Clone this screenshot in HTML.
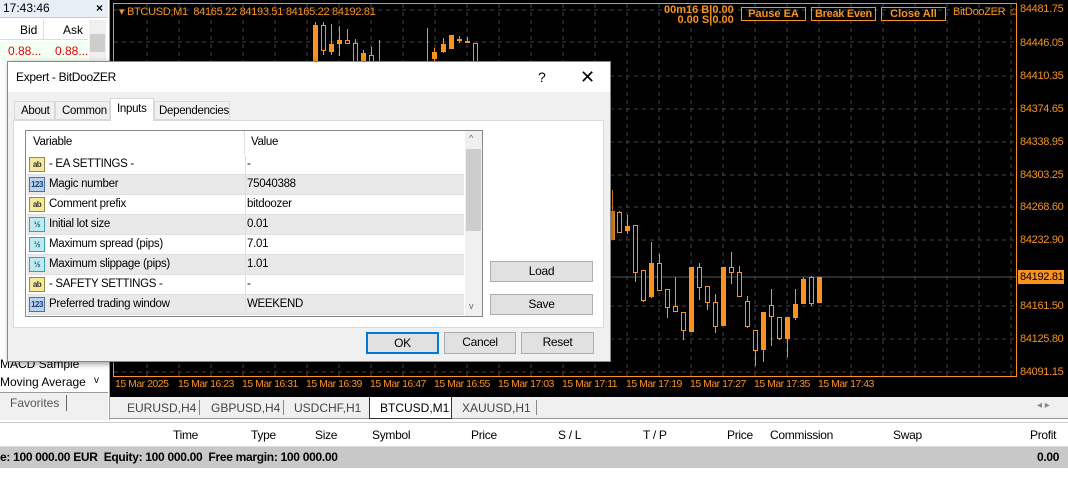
<!DOCTYPE html><html><head><meta charset="utf-8"><style>
*{box-sizing:border-box;margin:0;padding:0}
body{width:1068px;height:499px;overflow:hidden;background:#fff;font-family:"Liberation Sans",sans-serif;font-size:12px;color:#000;position:relative}
.a{position:absolute}
.dlg,.dlg .a{font-size:11.5px;letter-spacing:-0.3px}
.btn{position:absolute;background:#e1e1e1;border:1px solid #adadad;text-align:center;line-height:18px;font-size:12px}
.row{position:absolute;left:1px;width:437px;height:20px;border-bottom:1px solid #e0e0e0;line-height:19px}
.row.g{background:#e9e9e9}
.row .ic{position:absolute;left:2px;top:2px;width:16px;height:15px;border:1px solid #9a8a40;font-size:8px;line-height:13px;text-align:center;font-weight:bold;letter-spacing:-0.5px}
.ab{background:#f5e9a0;color:#333}
.n123{background:#b9d2ee;border-color:#4a70a0!important;color:#1b3d77}
.half{background:#bfeaf0;border-color:#3aa0b0!important;color:#1b6077}
.row .v{position:absolute;left:22px}
.row .w{position:absolute;left:220px}
.row .d{position:absolute;left:218px;top:0;width:1px;height:20px;background:#e0e0e0}
.pl{position:absolute;left:1020px;color:#f7931e;font-size:11px;letter-spacing:-0.3px}
.tl{position:absolute;top:378px;color:#f7931e;font-size:10.5px;letter-spacing:-0.5px}
.hd{position:absolute;top:428px;font-size:12px;letter-spacing:-0.3px}
.ob{position:absolute;top:7px;height:14px;border:1px solid #f7931e;color:#f7931e;font-weight:bold;font-size:11px;line-height:12px;text-align:center}
</style></head><body>
<div class="a" style="left:110px;top:0;width:958px;height:397px;background:#000"></div>
<svg class="a" style="left:0;top:0" width="1068" height="397">
<rect x="113.5" y="3.5" width="903" height="373" fill="none" stroke="#f7931e" stroke-width="1"/>
<g stroke="#444" stroke-dasharray="4,4">
<line x1="114" y1="10" x2="1016" y2="10"/><line x1="114" y1="42" x2="1016" y2="42"/><line x1="114" y1="76" x2="1016" y2="76"/><line x1="114" y1="109" x2="1016" y2="109"/><line x1="114" y1="142" x2="1016" y2="142"/><line x1="114" y1="175" x2="1016" y2="175"/><line x1="114" y1="207" x2="1016" y2="207"/><line x1="114" y1="240" x2="1016" y2="240"/><line x1="114" y1="306" x2="1016" y2="306"/><line x1="114" y1="339" x2="1016" y2="339"/><line x1="114" y1="372" x2="1016" y2="372"/>
</g>
<g stroke="#444" stroke-dasharray="4,4" id="vg"></g>
<line x1="114" y1="277" x2="1016" y2="277" stroke="#555"/>
<g id="cd"></g>
</svg>
<script>
var vg=document.getElementById('vg'),s='';
for(var x=147;x<1016;x+=32)s+='<line x1="'+x+'" y1="4" x2="'+x+'" y2="376"/>';
vg.innerHTML=s;
var c=[[315,1,25,62,22,62],[323,0,25,50,22,55],[331,1,44,52,24,55],[339,1,40,44,26,56],[347,0,40,43,29,44],[355,0,43,62,39,62],[363,1,53,62,50,62],[371,0,55,62,47,62],[379,0,62,62,40,62],[427,0,61,62,28,62],[434,1,52,59,48,62],[443,1,44,52,38,53],[451,1,35,49,35,49],[459,0,39,40,36,43],[467,0,41,42,37,42],[475,0,43,62,43,62],
[612,1,211,240,190,240],[619,0,212,232,211,233],[627,1,226,231,215,234],[635,0,225,272,225,282],[643,0,270,300,270,302],[651,1,263,297,242,298],[659,0,263,290,254,291],[667,0,289,307,289,318],[675,0,306,311,277,311],[683,0,312,330,312,340],[691,1,267,332,267,332],[699,0,267,287,263,300],[707,0,286,302,286,310],[715,0,302,326,294,333],[723,1,267,326,267,326],[731,0,267,272,252,284],[739,0,272,296,266,297],[747,0,301,326,296,328],[755,0,330,350,330,366],[763,1,312,350,312,362],[771,0,305,316,289,346],[779,0,317,338,317,340],[787,1,317,339,317,357],[795,1,304,318,289,320],[803,1,279,304,277,304],[811,0,277,303,276,306],[819,1,277,303,277,303]];
s='';c.forEach(function(k){s+='<line x1="'+(k[0]+.5)+'" y1="'+k[4]+'" x2="'+(k[0]+.5)+'" y2="'+k[5]+'" stroke="#f7931e"/>';
var h=Math.max(k[3]-k[2],1);s+=k[1]?'<rect x="'+(k[0]-2)+'" y="'+k[2]+'" width="5" height="'+h+'" fill="#f7931e"/>':'<rect x="'+(k[0]-1.5)+'" y="'+(k[2]+.5)+'" width="4" height="'+h+'" fill="#000" stroke="#f7931e"/>';});
document.getElementById('cd').innerHTML=s;
</script>
<div class="a" style="left:119px;top:5px;color:#f7931e;font-size:11px;letter-spacing:-0.3px">&#9662; BTCUSD,M1&nbsp; 84165.22 84193.51 84165.22 84192.81</div>
<div class="a" style="left:664px;top:5px;color:#f7931e;font-size:11px;font-weight:bold;line-height:10px;text-align:right">00m16 B|0.00<br>0.00 S|0.00</div>
<div class="ob" style="left:741px;width:65px">Pause EA</div>
<div class="ob" style="left:811px;width:65px;letter-spacing:-0.3px">Break Even</div>
<div class="ob" style="left:881px;width:65px">Close All</div>
<div class="a" style="left:953px;top:6px;color:#f7931e;font-size:11px;letter-spacing:-0.3px">BitDooZER &#9786;</div>
<div class="pl" style="top:3px">84481.75</div><div class="pl" style="top:37px">84446.05</div><div class="pl" style="top:70px">84410.35</div><div class="pl" style="top:103px">84374.65</div><div class="pl" style="top:136px">84338.95</div><div class="pl" style="top:169px">84303.25</div><div class="pl" style="top:201px">84268.60</div><div class="pl" style="top:234px">84232.90</div><div class="pl" style="top:300px">84161.50</div><div class="pl" style="top:333px">84125.80</div><div class="pl" style="top:366px">84091.15</div>
<div class="a" style="left:1018px;top:270px;width:46px;height:14px;background:#f7931e;color:#000;font-size:11px;line-height:14px;padding-left:2px;letter-spacing:-0.3px">84192.81</div>
<div class="tl" style="left:115px">15 Mar 2025</div><div class="tl" style="left:178px">15 Mar 16:23</div><div class="tl" style="left:242px">15 Mar 16:31</div><div class="tl" style="left:306px">15 Mar 16:39</div><div class="tl" style="left:370px">15 Mar 16:47</div><div class="tl" style="left:434px">15 Mar 16:55</div><div class="tl" style="left:498px">15 Mar 17:03</div><div class="tl" style="left:562px">15 Mar 17:11</div><div class="tl" style="left:626px">15 Mar 17:19</div><div class="tl" style="left:690px">15 Mar 17:27</div><div class="tl" style="left:754px">15 Mar 17:35</div><div class="tl" style="left:818px">15 Mar 17:43</div>
<div class="a" style="left:0;top:0;width:110px;height:420px;background:#fff;border-right:1px solid #a0a0a0"></div>
<div class="a" style="left:0;top:0;width:108px;height:18px;background:#e8eef6;border-bottom:1px solid #ccc;padding-left:3px;line-height:17px;font-size:12px">17:43:46<span style="position:absolute;left:96px;font-weight:bold">×</span></div>
<div class="a" style="left:0;top:20px;width:88px;height:20px;line-height:20px;border-bottom:1px solid #ddd"><span style="position:absolute;left:20px">Bid</span><span style="position:absolute;left:43px;top:0;width:1px;height:20px;background:#ddd"></span><span style="position:absolute;left:63px">Ask</span></div>
<div class="a" style="left:0;top:41px;width:88px;height:20px;line-height:20px;background:#f4fff4;color:#e00"><span style="position:absolute;left:8px">0.88...</span><span style="position:absolute;left:55px">0.88...</span></div>
<div class="a" style="left:89px;top:20px;width:17px;height:45px;background:#f0f0f0"><div style="position:absolute;left:1px;top:14px;width:15px;height:18px;background:#cdcdcd"></div></div>
<div class="a" style="left:0;top:355px;line-height:18px;font-size:12px">MACD Sample<br>Moving Average</div>
<div class="a" style="left:94px;top:375px;font-size:10px">v</div>
<div class="a" style="left:0;top:392px;width:108px;height:28px;background:#f0f0f0;border-top:1px solid #999"><span style="position:absolute;left:10px;top:3px;color:#555">Favorites</span><span style="position:absolute;left:66px;top:2px;width:1px;height:16px;background:#666"></span></div>
<div class="a" style="left:110px;top:397px;width:958px;height:22px;background:#f0f0f0;border-bottom:1px solid #999"></div>
<div class="a" style="left:127px;top:401px;color:#444">EURUSD,H4</div><div class="a" style="left:199px;top:400px;width:1px;height:15px;background:#888"></div>
<div class="a" style="left:211px;top:401px;color:#444">GBPUSD,H4</div><div class="a" style="left:283px;top:400px;width:1px;height:15px;background:#888"></div>
<div class="a" style="left:294px;top:401px;color:#444">USDCHF,H1</div>
<div class="a" style="left:369px;top:397px;width:83px;height:22px;background:#fff;border:1px solid #333;border-top:none;padding:4px 0 0 10px">BTCUSD,M1</div>
<div class="a" style="left:462px;top:401px;color:#444">XAUUSD,H1</div><div class="a" style="left:536px;top:400px;width:1px;height:15px;background:#888"></div>
<div class="a" style="left:1037px;top:400px;color:#888;font-size:10px">◂ ▸</div>
<div class="a" style="left:0;top:422px;width:1068px;height:25px;border-bottom:1px solid #ddd;border-top:1px solid #ccc"></div>
<div class="hd" style="left:173px">Time</div><div class="hd" style="left:251px">Type</div><div class="hd" style="left:315px">Size</div><div class="hd" style="left:372px">Symbol</div><div class="hd" style="left:471px">Price</div><div class="hd" style="left:558px">S / L</div><div class="hd" style="left:643px">T / P</div><div class="hd" style="left:727px">Price</div><div class="hd" style="left:770px">Commission</div><div class="hd" style="left:893px">Swap</div><div class="hd" style="left:1030px">Profit</div>
<div class="a" style="left:0;top:447px;width:1068px;height:21px;background:#c8c8c8;font-weight:bold;line-height:21px;letter-spacing:-0.3px">e: 100 000.00 EUR&nbsp; Equity: 100 000.00&nbsp; Free margin: 100 000.00<span style="position:absolute;left:1037px">0.00</span></div>
<div class="a dlg" style="left:7px;top:61px;width:604px;height:301px;background:#f0f0f0;border:1px solid #888;box-shadow:2px 2px 6px rgba(0,0,0,.4)">
<div class="a" style="left:0;top:0;width:602px;height:30px;background:#fff;font-size:12px;line-height:30px;padding-left:8px">Expert - BitDooZER<span style="position:absolute;left:530px;font-size:14px">?</span><span style="position:absolute;left:572px;font-size:18px">✕</span></div>
<div class="a" style="left:5px;top:58px;width:591px;height:208px;background:#fff;border:1px solid #d9d9d9"></div>
<div class="a" style="left:6px;top:39px;width:41px;height:19px;border:1px solid #d9d9d9;background:#f0f0f0;padding:3px 0 0 6px">About</div>
<div class="a" style="left:47px;top:39px;width:55px;height:19px;border:1px solid #d9d9d9;background:#f0f0f0;padding:3px 0 0 6px">Common</div>
<div class="a" style="left:102px;top:36px;width:44px;height:23px;border:1px solid #d9d9d9;border-bottom:none;background:#fff;padding:4px 0 0 6px">Inputs</div>
<div class="a" style="left:146px;top:39px;width:76px;height:19px;border:1px solid #d9d9d9;background:#f0f0f0;padding:3px 0 0 4px">Dependencies</div>
<div class="a" style="left:17px;top:68px;width:458px;height:187px;background:#fff;border:1px solid #828790;overflow:hidden">
<div class="a" style="left:0;top:0;width:438px;height:23px;line-height:23px"><span style="position:absolute;left:7px">Variable</span><span style="position:absolute;left:218px;top:0;width:1px;height:23px;background:#e0e0e0"></span><span style="position:absolute;left:225px">Value</span></div>
<div class="row" style="top:24px"><span class="ic ab">ab</span><span class="v">- EA SETTINGS -</span><span class="d"></span><span class="w">-</span></div>
<div class="row g" style="top:44px"><span class="ic n123">123</span><span class="v">Magic number</span><span class="d"></span><span class="w">75040388</span></div>
<div class="row" style="top:64px"><span class="ic ab">ab</span><span class="v">Comment prefix</span><span class="d"></span><span class="w">bitdoozer</span></div>
<div class="row g" style="top:84px"><span class="ic half">½</span><span class="v">Initial lot size</span><span class="d"></span><span class="w">0.01</span></div>
<div class="row" style="top:104px"><span class="ic half">½</span><span class="v">Maximum spread (pips)</span><span class="d"></span><span class="w">7.01</span></div>
<div class="row g" style="top:124px"><span class="ic half">½</span><span class="v">Maximum slippage (pips)</span><span class="d"></span><span class="w">1.01</span></div>
<div class="row" style="top:144px"><span class="ic ab">ab</span><span class="v">- SAFETY SETTINGS -</span><span class="d"></span><span class="w">-</span></div>
<div class="row g" style="top:164px"><span class="ic n123">123</span><span class="v">Preferred trading window</span><span class="d"></span><span class="w">WEEKEND</span></div>
<div class="a" style="left:439px;top:0;width:17px;height:185px;background:#f0f0f0"><div style="position:absolute;top:2px;left:4px;font-size:9px;color:#666">^</div><div style="position:absolute;top:18px;left:1px;width:15px;height:82px;background:#cdcdcd"></div><div style="position:absolute;top:170px;left:4px;font-size:9px;color:#666">v</div></div>
</div>
<div class="btn" style="left:482px;top:199px;width:103px;height:21px">Load</div>
<div class="btn" style="left:482px;top:232px;width:103px;height:21px">Save</div>
<div class="btn" style="left:358px;top:270px;width:73px;height:22px;border:2px solid #0078d7;line-height:18px">OK</div>
<div class="btn" style="left:436px;top:270px;width:72px;height:22px">Cancel</div>
<div class="btn" style="left:513px;top:270px;width:73px;height:22px">Reset</div>
</div>
</body></html>
